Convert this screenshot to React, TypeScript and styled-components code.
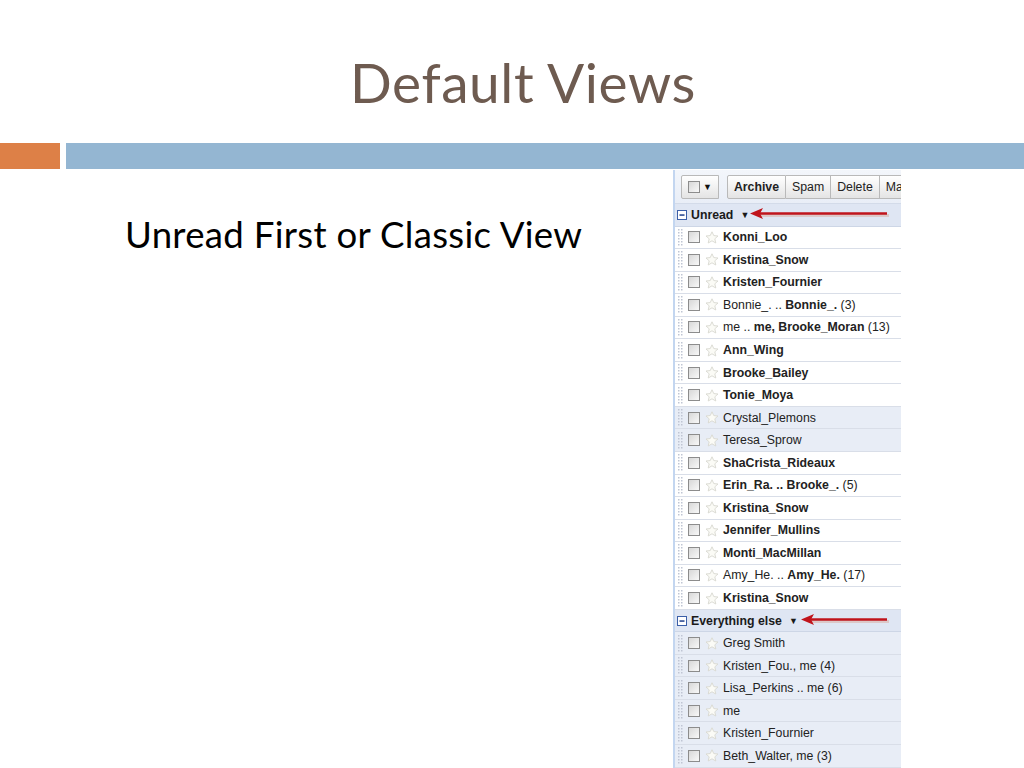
import styled, { createGlobalStyle } from 'styled-components';

const GlobalStyle = createGlobalStyle`
  html, body {
    margin: 0;
    padding: 0;
    background: #ffffff;
  }
  body {
    width: 1024px;
    height: 768px;
    overflow: hidden;
  }
`;

const Slide = styled.div`
  width: 1024px;
  height: 768px;
  display: flex;
  flex-direction: column;
  background: #ffffff;
  overflow: hidden;
`;

const TitleArea = styled.header`
  height: 143px;
  display: flex;
  justify-content: center;
  align-items: flex-start;
`;

const Title = styled.h1`
  margin: 49px 0 0 22px;
  font-family: 'Lato', 'Open Sans', sans-serif;
  font-weight: 400;
  font-size: 55px;
  line-height: 1.2;
  color: #6e5b50;
  letter-spacing: 0.6px;
`;

const BarRow = styled.div`
  display: flex;
  gap: 6px;
  height: 26px;
`;

const AccentBar = styled.div`
  width: 60px;
  background: #dd8047;
`;

const RuleBar = styled.div`
  flex: 1;
  background: #94b6d2;
`;

const Content = styled.main`
  flex: 1;
  display: flex;
  min-height: 0;
`;

const TextColumn = styled.section`
  flex: 1;
  padding: 44px 0 0 125px;
`;

const Bullet = styled.p`
  margin: 0;
  font-family: 'Lato', 'Open Sans', sans-serif;
  font-size: 36.6px;
  line-height: 1.2;
  color: #000000;
  letter-spacing: 0.3px;
`;

const Shot = styled.section`
  width: 226px;
  margin: 1px 123px 0 0;
  border-left: 2px solid #c3d6f0;
  background: #ffffff;
  font-family: 'Liberation Sans', Arial, sans-serif;
  font-size: 12.3px;
  color: #222222;
  overflow: hidden;
`;

const Toolbar = styled.div`
  height: 33px;
  display: flex;
  align-items: center;
  gap: 8px;
  padding: 0 0 0 6px;
  background: linear-gradient(#f3f6fb, #e9eef7);
  border-bottom: 1px solid #d3dbe9;
  white-space: nowrap;
  overflow: hidden;
`;

const ButtonGroup = styled.div`
  display: flex;
`;

const ToolButton = styled.div<{ $bold?: boolean }>`
  height: 22px;
  display: flex;
  align-items: center;
  gap: 3px;
  padding: 0 6px;
  border: 1px solid #b9b9b9;
  border-left-width: 0;
  background: linear-gradient(#ffffff, #e4e4e4);
  font-weight: ${(p) => (p.$bold ? 700 : 400)};
  color: #222222;

  &:first-child {
    border-left-width: 1px;
    border-radius: 2px 0 0 2px;
  }
`;

const Caret = styled.span`
  font-size: 9px;
  color: #111111;
`;

const SectionHead = styled.div`
  position: relative;
  height: 22.5px;
  display: flex;
  align-items: center;
  gap: 4px;
  padding-left: 2px;
  background: #dfe6f3;
  border-bottom: 1px solid #cdd6e6;
  box-sizing: border-box;
  font-weight: 700;
  color: #1a1a1a;
  white-space: nowrap;
`;

const HeadCaret = styled.span`
  font-size: 9px;
  margin-left: 3px;
`;

const ArrowWrap = styled.div<{ $left: number }>`
  position: absolute;
  top: 3px;
  left: ${(p) => p.$left}px;
`;

const Row = styled.div<{ $read?: boolean }>`
  height: 22.55px;
  box-sizing: border-box;
  display: flex;
  align-items: center;
  padding-left: 3px;
  background: ${(p) => (p.$read ? '#e8edf6' : '#ffffff')};
  border-bottom: 1px solid #d9dee8;
  white-space: nowrap;
`;

const Sender = styled.span`
  margin-left: 4px;
`;

const Seg = styled.span<{ $bold?: boolean }>`
  font-weight: ${(p) => (p.$bold ? 700 : 400)};
`;

function CheckBox({ size = 12 }: { size?: number }) {
  return (
    <svg width={size} height={size} viewBox="0 0 12 12">
      <defs>
        <linearGradient id="cbg" x1="0" y1="0" x2="1" y2="1">
          <stop offset="0" stopColor="#d6d6d6" />
          <stop offset="1" stopColor="#fafafa" />
        </linearGradient>
      </defs>
      <rect x="0.5" y="0.5" width="11" height="11" fill="url(#cbg)" stroke="#8c8c8c" />
    </svg>
  );
}

function Handle() {
  const dots = [];
  for (let r = 0; r < 6; r++) {
    for (let c = 0; c < 2; c++) {
      dots.push(<rect key={`${r}-${c}`} x={c * 3} y={r * 3} width="1.5" height="1.5" fill="#bfc5d3" />);
    }
  }
  return (
    <svg width="6" height="17" viewBox="0 0 6 17" style={{ marginRight: 4 }}>
      {dots}
    </svg>
  );
}

function Star() {
  return (
    <svg width="14" height="13" viewBox="0 0 14 13" style={{ marginLeft: 5 }}>
      <path
        d="M7 0.8 L8.8 4.6 L13 5 L9.8 7.8 L10.8 12 L7 9.8 L3.2 12 L4.2 7.8 L1 5 L5.2 4.6 Z"
        fill="#fbfbf6"
        stroke="#d8d8d0"
        strokeWidth="0.9"
      />
    </svg>
  );
}

function MinusBox() {
  return (
    <svg width="10" height="10" viewBox="0 0 10 10">
      <rect x="0.5" y="0.5" width="9" height="9" fill="#ffffff" stroke="#3b5fa8" />
      <rect x="2.5" y="4.3" width="5" height="1.5" fill="#1f3f8a" />
    </svg>
  );
}

function RedArrow({ width }: { width: number }) {
  return (
    <svg width={width} height="14" viewBox={`0 0 ${width} 14`}>
      <line x1="10" y1="8.5" x2={width - 1} y2="8.5" stroke="#dcc8c8" strokeWidth="3" />
      <line x1="8" y1="6.5" x2={width - 3} y2="6.5" stroke="#c0141c" strokeWidth="2.6" />
      <path d="M0 6.5 L13 1 L10 6.5 L13 12 Z" fill="#c0141c" />
    </svg>
  );
}

type Part = [string, boolean];
type Mail = { parts: Part[]; read?: boolean };

const b = (t: string): Part => [t, true];
const n = (t: string): Part => [t, false];

const unread: Mail[] = [
  { parts: [b('Konni_Loo')] },
  { parts: [b('Kristina_Snow')] },
  { parts: [b('Kristen_Fournier')] },
  { parts: [n('Bonnie_. .. '), b('Bonnie_.'), n(' (3)')] },
  { parts: [n('me .. '), b('me, Brooke_Moran'), n(' (13)')] },
  { parts: [b('Ann_Wing')] },
  { parts: [b('Brooke_Bailey')] },
  { parts: [b('Tonie_Moya')] },
  { parts: [n('Crystal_Plemons')], read: true },
  { parts: [n('Teresa_Sprow')], read: true },
  { parts: [b('ShaCrista_Rideaux')] },
  { parts: [b('Erin_Ra. .. Brooke_.'), n(' (5)')] },
  { parts: [b('Kristina_Snow')] },
  { parts: [b('Jennifer_Mullins')] },
  { parts: [b('Monti_MacMillan')] },
  { parts: [n('Amy_He. .. '), b('Amy_He.'), n(' (17)')] },
  { parts: [b('Kristina_Snow')] },
];

const everythingElse: Mail[] = [
  { parts: [n('Greg Smith')], read: true },
  { parts: [n('Kristen_Fou., me (4)')], read: true },
  { parts: [n('Lisa_Perkins .. me (6)')], read: true },
  { parts: [n('me')], read: true },
  { parts: [n('Kristen_Fournier')], read: true },
  { parts: [n('Beth_Walter, me (3)')], read: true },
];

function MailRow({ mail }: { mail: Mail }) {
  return (
    <Row $read={mail.read}>
      <Handle />
      <CheckBox />
      <Star />
      <Sender>
        {mail.parts.map(([text, bold], i) => (
          <Seg key={i} $bold={bold}>
            {text}
          </Seg>
        ))}
      </Sender>
    </Row>
  );
}

function Section({
  label,
  arrowLeft,
  arrowWidth,
  mails,
}: {
  label: string;
  arrowLeft: number;
  arrowWidth: number;
  mails: Mail[];
}) {
  return (
    <>
      <SectionHead>
        <MinusBox />
        <span>{label}</span>
        <HeadCaret>▼</HeadCaret>
        <ArrowWrap $left={arrowLeft}>
          <RedArrow width={arrowWidth} />
        </ArrowWrap>
      </SectionHead>
      {mails.map((m, i) => (
        <MailRow key={i} mail={m} />
      ))}
    </>
  );
}

export default function App() {
  return (
    <>
      <GlobalStyle />
      <Slide>
        <TitleArea>
          <Title>Default Views</Title>
        </TitleArea>
        <BarRow>
          <AccentBar />
          <RuleBar />
        </BarRow>
        <Content>
          <TextColumn>
            <Bullet>Unread First or Classic View</Bullet>
          </TextColumn>
          <Shot>
            <Toolbar>
              <ButtonGroup>
                <ToolButton>
                  <CheckBox size={12} />
                  <Caret>▼</Caret>
                </ToolButton>
              </ButtonGroup>
              <ButtonGroup>
                <ToolButton $bold>Archive</ToolButton>
                <ToolButton>Spam</ToolButton>
                <ToolButton>Delete</ToolButton>
                <ToolButton>Ma</ToolButton>
              </ButtonGroup>
            </Toolbar>
            <Section label="Unread" arrowLeft={75} arrowWidth={140} mails={unread} />
            <Section label="Everything else" arrowLeft={126} arrowWidth={89} mails={everythingElse} />
          </Shot>
        </Content>
      </Slide>
    </>
  );
}
